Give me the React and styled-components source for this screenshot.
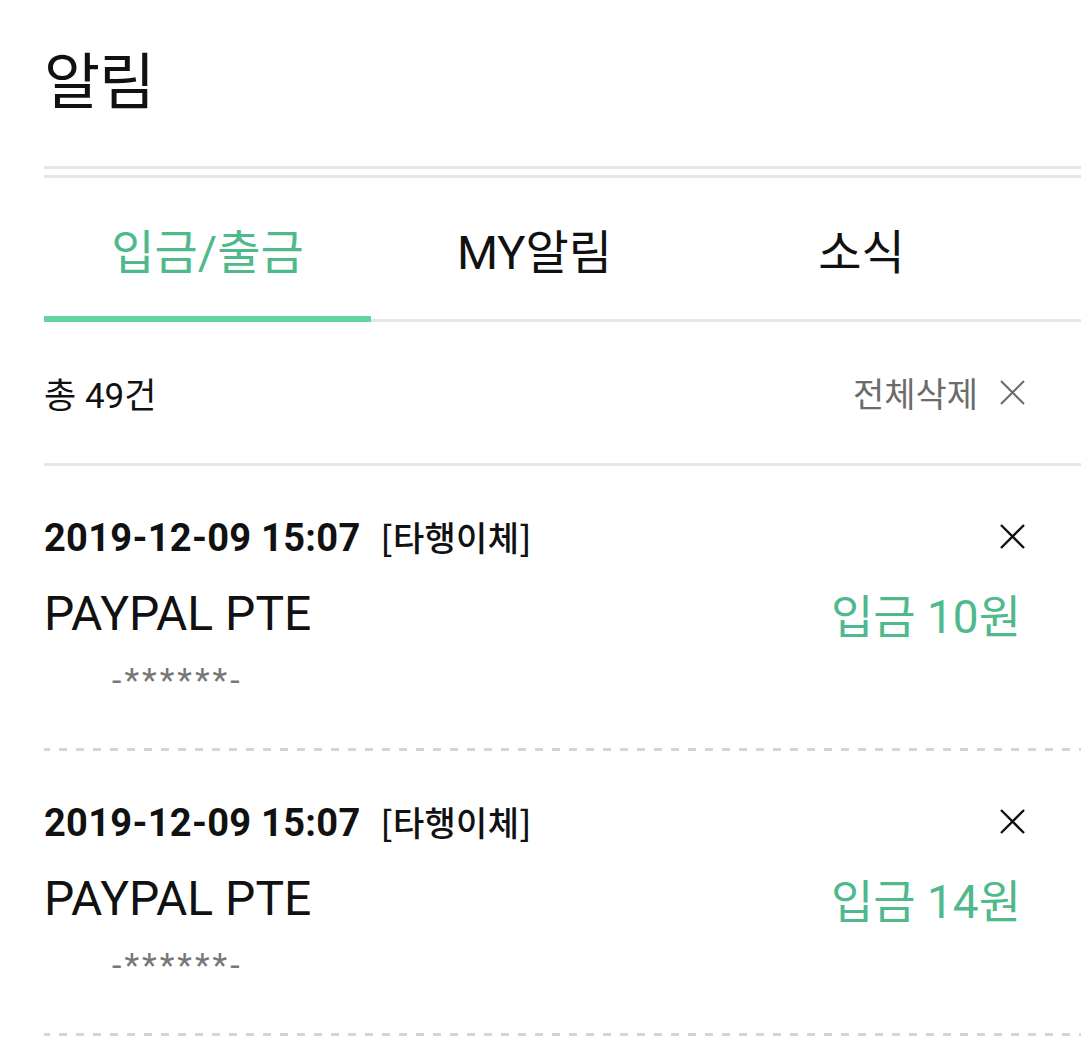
import React, { useState } from "react";
import styled, { createGlobalStyle } from "styled-components";

const Global = createGlobalStyle`
  html, body { margin: 0; padding: 0; background: #fff; }
  body { font-family: "Roboto", "Noto Sans CJK KR", sans-serif; color: #111; }
  * { box-sizing: border-box; }
`;

const GREEN = "#4fb98b";
const BAR = "#62d29e";
const RULE = "#e6e6e6";

const Page = styled.div`
  margin-left: 44px;
  width: 1037px;
  overflow: hidden;
`;

const Header = styled.header`
  height: 166px;
  padding-top: 38px;
`;

const Title = styled.h1`
  margin: 0;
  font-family: "Noto Sans CJK KR", sans-serif;
  font-weight: 400;
  font-size: 61px;
  line-height: 80px;
  letter-spacing: -1px;
`;

const DoubleRule = styled.div`
  height: 12px;
  border-top: 3px solid ${RULE};
  border-bottom: 3px solid ${RULE};
`;

const TabBar = styled.nav`
  display: flex;
  border-bottom: 3px solid ${RULE};
`;

const Tab = styled.button`
  position: relative;
  width: 327px;
  height: 141px;
  border: 0;
  padding: 0;
  background: none;
  font-family: "Roboto", "Noto Sans CJK KR", sans-serif;
  font-size: 47px;
  color: ${(p) => (p.$active ? GREEN : "#111")};
  cursor: pointer;
  &::after {
    content: "";
    display: ${(p) => (p.$active ? "block" : "none")};
    position: absolute;
    left: 0;
    right: 0;
    bottom: -3px;
    height: 6px;
    background: ${BAR};
  }
`;

const Summary = styled.div`
  display: flex;
  align-items: center;
  justify-content: space-between;
  height: 144px;
  padding-right: 56px;
  border-bottom: 3px solid ${RULE};
`;

const Count = styled.span`
  font-size: 35px;
  color: #111;
`;

const ClearAll = styled.button`
  display: flex;
  align-items: center;
  gap: 22px;
  border: 0;
  padding: 0;
  background: none;
  font-family: "Noto Sans CJK KR", sans-serif;
  font-size: 34px;
  color: #6b6b6b;
  cursor: pointer;
`;

const Item = styled.article`
  padding: 46px 56px 49px 0;
  background-image: linear-gradient(to right, #d4d4d4 8px, transparent 8px);
  background-size: 17px 3px;
  background-repeat: repeat-x;
  background-position: -2px bottom;
`;

const Row = styled.div`
  display: flex;
  align-items: center;
  justify-content: space-between;
  height: ${(p) => p.$h}px;
  margin-top: ${(p) => p.$mt || 0}px;
`;

const DateText = styled.span`
  font-size: 38px;
  font-weight: 700;
  letter-spacing: 0.3px;
  color: #111;
`;

const Kind = styled.span`
  margin-left: 20px;
  font-family: "Noto Sans CJK KR", sans-serif;
  font-weight: 500;
  font-size: 34px;
`;

const Name = styled.span`
  font-size: 48px;
  color: #111;
`;

const Amount = styled.span`
  font-size: 46px;
  color: ${GREEN};
  margin-right: 4px;
`;

const Masked = styled.span`
  padding-left: 68px;
  font-size: 34px;
  color: #777;
  letter-spacing: 3px;
`;

const IconButton = styled.button`
  display: flex;
  border: 0;
  padding: 0;
  background: none;
  cursor: pointer;
`;

const Cross = ({ size = 25, color = "#111", w = 2.4 }) => (
  <svg width={size} height={size} viewBox="0 0 25 25" fill="none">
    <path d="M1 1L24 24M24 1L1 24" stroke={color} strokeWidth={w} />
  </svg>
);

const items = [
  { date: "2019-12-09 15:07", kind: "[타행이체]", name: "PAYPAL PTE", amount: "입금 10원" },
  { date: "2019-12-09 15:07", kind: "[타행이체]", name: "PAYPAL PTE", amount: "입금 14원" },
];

export default function App() {
  const [tab, setTab] = useState(0);
  const tabs = ["입금/출금", "MY알림", "소식"];
  return (
    <Page>
      <Global />
      <Header>
        <Title>알림</Title>
      </Header>
      <DoubleRule />
      <TabBar>
        {tabs.map((t, i) => (
          <Tab key={t} $active={tab === i} onClick={() => setTab(i)}>
            {t}
          </Tab>
        ))}
      </TabBar>
      <Summary>
        <Count>총 49건</Count>
        <ClearAll>
          전체삭제
          <Cross size={25} color="#6b6b6b" w={2} />
        </ClearAll>
      </Summary>
      {items.map((it, i) => (
        <Item key={i}>
          <Row $h={48}>
            <DateText>
              {it.date}
              <Kind>{it.kind}</Kind>
            </DateText>
            <IconButton>
              <Cross />
            </IconButton>
          </Row>
          <Row $h={58} $mt={24}>
            <Name>{it.name}</Name>
            <Amount>{it.amount}</Amount>
          </Row>
          <Row $h={44} $mt={16}>
            <Masked>-******-</Masked>
          </Row>
        </Item>
      ))}
    </Page>
  );
}
